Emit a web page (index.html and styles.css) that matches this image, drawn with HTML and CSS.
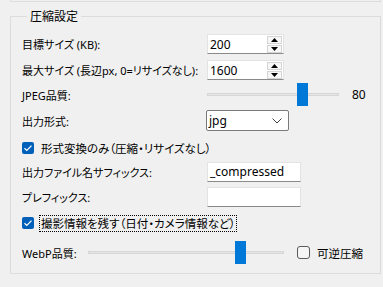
FILE: index.html
```html
<!DOCTYPE html>
<html lang="ja">
<head>
  <meta charset="UTF-8">
  <title>圧縮設定</title>
<link rel="stylesheet" href="styles.css">
</head>
<body>
    <div class="prev-group"></div>
    <fieldset class="group">
        <legend>圧縮設定</legend>
        <div class="form">
            <div class="row row-spin">
                <span class="label">目標サイズ (KB):</span>
                <div class="spinbox">
                    <span class="spin-value">200</span>
                    <div class="spin-buttons">
                        <span class="spin-btn"><svg width="7" height="4" viewBox="0 0 7 4"><path d="M0 4 L3.5 0 L7 4 Z" fill="#000"/></svg></span>
                        <span class="spin-btn"><svg width="7" height="4" viewBox="0 0 7 4"><path d="M0 0 L7 0 L3.5 4 Z" fill="#000"/></svg></span>
                    </div>
                </div>
            </div>
            <div class="row row-spin">
                <span class="label">最大サイズ (長辺px, 0=リサイズなし):</span>
                <div class="spinbox">
                    <span class="spin-value">1600</span>
                    <div class="spin-buttons">
                        <span class="spin-btn"><svg width="7" height="4" viewBox="0 0 7 4"><path d="M0 4 L3.5 0 L7 4 Z" fill="#000"/></svg></span>
                        <span class="spin-btn"><svg width="7" height="4" viewBox="0 0 7 4"><path d="M0 0 L7 0 L3.5 4 Z" fill="#000"/></svg></span>
                    </div>
                </div>
            </div>
            <div class="row row-slider">
                <span class="label">JPEG品質:</span>
                <div class="slider slider-jpeg">
                    <div class="track"></div>
                    <div class="thumb" style="left: 90px;"></div>
                </div>
                <span class="slider-value">80</span>
            </div>
            <div class="row row-combo">
                <span class="label">出力形式:</span>
                <div class="combobox">
                    <span>jpg</span>
                    <svg width="10" height="6" viewBox="0 0 10 6"><path d="M0.5 0.5 L5 5 L9.5 0.5" fill="none" stroke="#444" stroke-width="1"/></svg>
                </div>
            </div>
            <div class="row row-check">
                <span class="checkbox checked"><svg width="10" height="8" viewBox="0 0 10 8"><path d="M1.5 4.2 L3.8 6.4 L8.5 1.6" fill="none" stroke="#fff" stroke-width="1.3"/></svg></span>
                <span class="check-text">形式変換のみ（圧縮・リサイズなし）</span>
            </div>
            <div class="row row-entry">
                <span class="label">出力ファイル名サフィックス:</span>
                <div class="entry">_compressed</div>
            </div>
            <div class="row row-entry">
                <span class="label">プレフィックス:</span>
                <div class="entry"></div>
            </div>
            <div class="row row-check">
                <span class="checkbox checked"><svg width="10" height="8" viewBox="0 0 10 8"><path d="M1.5 4.2 L3.8 6.4 L8.5 1.6" fill="none" stroke="#fff" stroke-width="1.3"/></svg></span>
                <span class="check-text focused">撮影情報を残す（日付・カメラ情報など）</span>
            </div>
            <div class="row row-slider">
                <span class="label-short">WebP品質:</span>
                <div class="slider slider-webp">
                    <div class="track"></div>
                    <div class="thumb" style="left: 147px;"></div>
                </div>
                <span class="checkbox lossless"></span>
                <span class="check-text">可逆圧縮</span>
            </div>
        </div>
    </fieldset>
</body>
</html>
```
FILE: styles.css
```css
body {
    margin: 0;
    background-color: #f0f0f0;
    font-family: "Noto Sans", "Noto Sans CJK JP", sans-serif;
    font-size: 11px;
    font-feature-settings: "palt";
    color: #000;
}
.prev-group {
    margin-left: 10px;
    width: 369px;
    height: 1px;
    border: 1px solid #dcdcdc;
    border-top: none;
}
.group {
    margin: 8px 0 0 10px;
    width: 371px;
    box-sizing: border-box;
    border: 1px solid #dcdcdc;
    padding: 0 0 9px 11px;
}
.group legend {
    margin-left: 5px;
    padding: 0 3px;
    font-size: 12px;
    line-height: 13px;
}
.form {
    display: grid;
    grid-template-rows: 26px 23px 27px 28px 24px 25px 26px 28px 23px;
    padding-top: 11px;
}
.row {
    display: flex;
    align-items: center;
    align-self: start;
}
.row-spin, .row-entry, .row-check {
    height: 20px;
}
.row-slider {
    height: 23px;
}
.row-combo {
    height: 21px;
}
.label {
    width: 185px;
    flex-shrink: 0;
    white-space: nowrap;
}
.label-short {
    width: 66px;
    flex-shrink: 0;
}
.spinbox {
    width: 77px;
    height: 20px;
    box-sizing: border-box;
    background-color: white;
    border: 1px solid #e3e3e3;
    border-bottom-color: #8a8a8a;
    display: flex;
    align-items: center;
    padding-left: 2px;
    font-size: 12px;
}
.spin-value {
    flex: 1;
}
.spin-buttons {
    display: flex;
    flex-direction: column;
    gap: 1px;
    margin-right: 1px;
}
.spin-btn {
    width: 15px;
    height: 8px;
    box-sizing: border-box;
    border: 1px solid #d4d4d4;
    background-color: #f7f7f7;
    display: flex;
    justify-content: center;
    align-items: center;
}
.slider {
    position: relative;
    height: 23px;
}
.slider-jpeg {
    width: 132px;
}
.slider-webp {
    width: 196px;
}
.track {
    margin-top: 10px;
    height: 3px;
    box-sizing: border-box;
    background-color: #e6e6e6;
    border: 1px solid #d6d6d6;
}
.thumb {
    position: absolute;
    top: 0;
    width: 11px;
    height: 23px;
    background-color: #0078d7;
}
.slider-value {
    margin-left: 13px;
    font-size: 12px;
}
.combobox {
    margin-left: -1px;
    width: 83px;
    height: 21px;
    box-sizing: border-box;
    background-color: white;
    border: 1px solid #7a7a7a;
    border-radius: 2px;
    display: flex;
    align-items: center;
    justify-content: space-between;
    padding: 0 6px 0 2px;
    font-size: 12px;
}
.checkbox {
    width: 12px;
    height: 12px;
    box-sizing: border-box;
    border-radius: 2px;
    display: flex;
    justify-content: center;
    align-items: center;
    flex-shrink: 0;
}
.checkbox.checked {
    background-color: #005fb8;
}
.checkbox.lossless {
    margin-left: 13px;
    width: 13px;
    height: 13px;
    border: 1px solid #5a5a5a;
    border-radius: 3px;
    background-color: #f5f5f5;
}
.check-text {
    margin-left: 7px;
    white-space: nowrap;
    font-size: 11.5px;
}
.check-text.focused {
    margin-left: 6px;
    padding: 0 1px;
    line-height: 15px;
    outline: 1px dotted #000;
}
.entry {
    width: 94px;
    height: 20px;
    box-sizing: border-box;
    background-color: white;
    border: 1px solid #e3e3e3;
    border-bottom-color: #8a8a8a;
    padding-left: 2px;
    line-height: 18px;
    font-size: 12px;
}
```
